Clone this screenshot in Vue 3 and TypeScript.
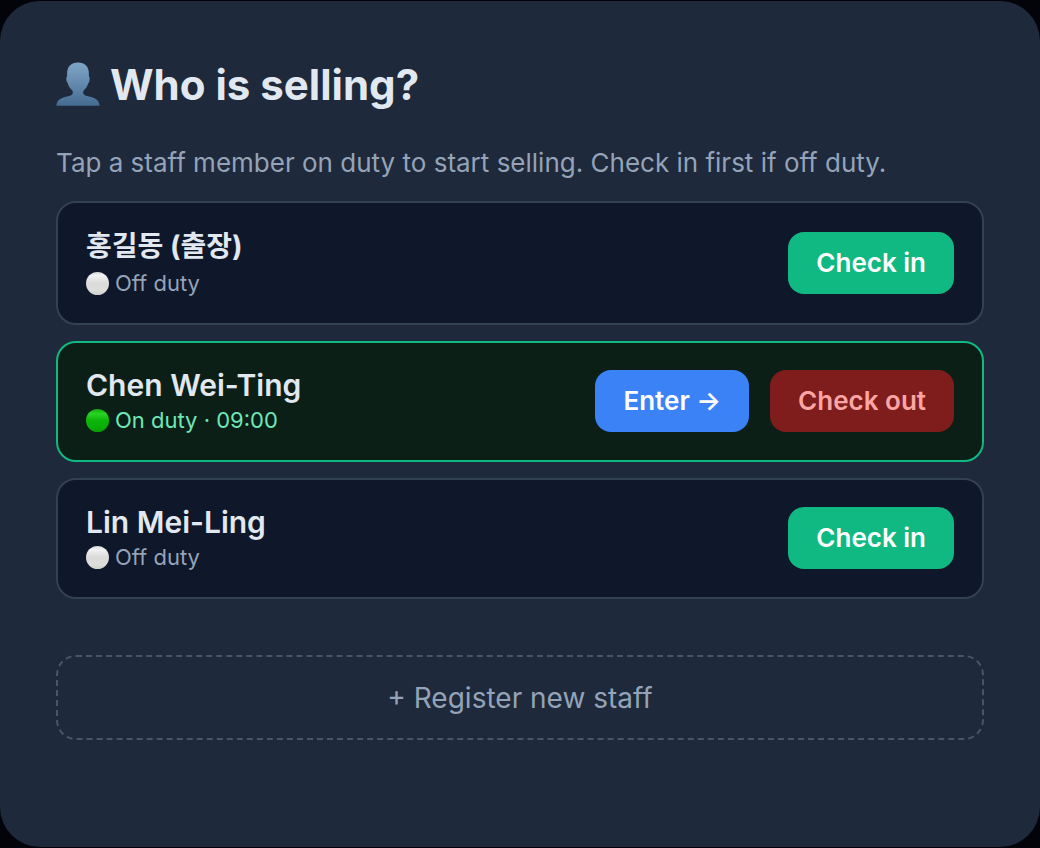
<script setup lang="ts">
import { ref } from 'vue'

interface Staff {
  id: number
  name: string
  lang: string
  since: string | null
}

const staff = ref<Staff[]>([
  { id: 1, name: '홍길동 (출장)', lang: 'ko', since: null },
  { id: 2, name: 'Chen Wei-Ting', lang: 'en', since: '09:00' },
  { id: 3, name: 'Lin Mei-Ling', lang: 'en', since: null },
])

function checkIn(member: Staff) {
  member.since = new Date().toTimeString().slice(0, 5)
}

function checkOut(member: Staff) {
  member.since = null
}
</script>

<template>
  <main class="panel">
    <h1 class="title">
      <svg class="person" viewBox="0 0 44 44" aria-hidden="true">
        <defs>
          <linearGradient id="person-fill" x1="0" y1="0" x2="0" y2="1">
            <stop offset="0" stop-color="#7fa5c6" />
            <stop offset="0.5" stop-color="#6389ad" />
            <stop offset="1" stop-color="#466b91" />
          </linearGradient>
        </defs>
        <path
          fill="url(#person-fill)"
          d="M22 -0.4C29 -0.4 32.9 4 32.9 10.5V13.6C33.8 14.2 33.8 15.8 33.5 17.4C33.2 19 32.8 19.8 32.2 20.2C31.6 23 30 25.6 27.8 27.2C27.1 28.4 27.1 29.8 27.4 30.8C28 32.6 30.2 33 33 33.6C39 34.8 43.2 37 43.6 42.8H0.4C0.8 37 5 34.8 11 33.6C13.8 33 16 32.6 16.6 30.8C16.9 29.8 16.9 28.4 16.2 27.2C14 25.6 12.4 23 11.8 20.2C11.2 19.8 10.8 19 10.5 17.4C10.2 15.8 10.2 14.2 11.1 13.6V10.5C11.1 4 15 -0.4 22 -0.4Z"
        />
      </svg>
      <span>Who is selling?</span>
    </h1>
    <p class="hint">Tap a staff member on duty to start selling. Check in first if off duty.</p>

    <ul class="list">
      <li v-for="member in staff" :key="member.id" class="card" :class="{ active: member.since }">
        <div class="info">
          <div class="name" :lang="member.lang">{{ member.name }}</div>
          <div class="status">
            <span class="dot"></span>
            <span>{{ member.since ? `On duty · ${member.since}` : 'Off duty' }}</span>
          </div>
        </div>
        <div class="actions">
          <template v-if="member.since">
            <button type="button" class="btn enter">Enter →</button>
            <button type="button" class="btn out" @click="checkOut(member)">Check out</button>
          </template>
          <button v-else type="button" class="btn in" @click="checkIn(member)">Check in</button>
        </div>
      </li>
    </ul>

    <button type="button" class="register">+ Register new staff</button>
  </main>
</template>

<style>
body {
  background: #020409;
}
</style>

<style scoped>
.panel {
  box-sizing: border-box;
  min-height: calc(100vh - 2px);
  margin: 1px 0;
  padding: 56px;
  border-radius: 40px;
  background: #1e293b;
  color: #e2e8f0;
  font-family: Inter, 'Noto Sans CJK KR', sans-serif;
}

.title {
  display: flex;
  align-items: center;
  gap: 10px;
  margin: 0 0 32px;
  font-size: 42px;
  font-weight: 700;
  line-height: 56px;
}

.person {
  width: 44px;
  height: 44px;
  overflow: visible;
}

.hint {
  margin: 0 0 20px;
  color: #94a3b8;
  font-size: 26px;
  line-height: 36px;
}

.list {
  display: flex;
  flex-direction: column;
  gap: 16px;
  margin: 0 0 56px;
  padding: 0;
  list-style: none;
}

.card {
  display: flex;
  align-items: center;
  justify-content: space-between;
  padding: 26px 28px 27px;
  border: 2px solid #334155;
  border-radius: 20px;
  background: #0f172a;
}

.card.active {
  border-color: #10b981;
  background: #0b1f16;
}

.info {
  display: flex;
  flex-direction: column;
  gap: 6px;
}

.name {
  font-size: 30px;
  font-weight: 600;
  line-height: 32px;
}

.name:lang(ko) {
  font-size: 28px;
  font-weight: 700;
  line-height: 35px;
}

.status {
  display: flex;
  align-items: center;
  gap: 6px;
  color: #94a3b8;
  font-size: 22px;
  line-height: 26px;
}

.active .status {
  color: #6ee7b7;
}

.dot {
  width: 23px;
  height: 23px;
  border-radius: 50%;
  background: linear-gradient(#d8d8d8, #f2f2f2 15%, #dadad9 50%, #dededd 80%, #cfcfce);
}

.active .dot {
  background: linear-gradient(#12a80f, #2bd424 20%, #0cb609 50%, #08ae06 80%, #0a9a08);
}

.actions {
  display: flex;
  gap: 21px;
}

.btn {
  height: 62px;
  padding: 0 28px;
  border: 0;
  border-radius: 16px;
  color: #fff;
  font-family: inherit;
  font-size: 26px;
  font-weight: 600;
  line-height: 32px;
  cursor: pointer;
}

.in {
  background: #10b981;
}

.enter {
  background: #3b82f6;
}

.out {
  background: #7f1d1d;
  color: #fca5a5;
}

.register {
  width: 100%;
  height: 85px;
  border: 2px dashed #475569;
  border-radius: 20px;
  background: transparent;
  color: #94a3b8;
  font-family: inherit;
  font-size: 28px;
  line-height: 34px;
  cursor: pointer;
}
</style>
